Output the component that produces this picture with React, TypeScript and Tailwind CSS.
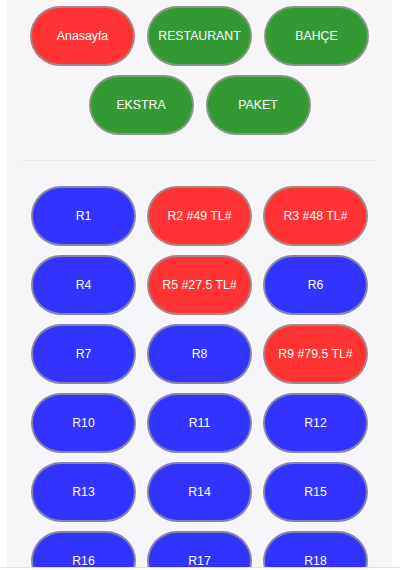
import React from 'react';

const navItems = [
  { label: 'Anasayfa', active: true },
  { label: 'RESTAURANT', active: false },
  { label: 'BAHÇE', active: false },
  { label: 'EKSTRA', active: false },
  { label: 'PAKET', active: false },
];

const busy: Record<number, string> = {
  2: '49',
  3: '48',
  5: '27.5',
  9: '79.5',
};

const tables = Array.from({ length: 21 }, (_, i) => i + 1);

const pill =
  'flex h-[60px] w-[105px] items-center justify-center rounded-full border-2 border-[#99999acc] text-[12.3px] text-white';

export default function App() {
  return (
    <div className="min-h-screen bg-white font-['Liberation_Sans',Arial,sans-serif]">
      <div className="ml-[7px] mr-[8px] bg-[#f6f6f9] pt-[6px] pb-6">
        <div className="flex flex-wrap justify-center gap-x-3 gap-y-[9px] px-4">
          {navItems.map((item) => (
            <button
              key={item.label}
              type="button"
              className={`${pill} ${item.active ? 'bg-[#ff3333]' : 'bg-[#339933]'}`}
            >
              {item.label}
            </button>
          ))}
        </div>

        <div className="mx-4 mt-[25px] mb-[25px] h-px bg-[#ebebef]" />

        <div className="grid grid-cols-[105px_105px_105px] justify-center gap-x-[11px] gap-y-[9px]">
          {tables.map((n) => {
            const price = busy[n];
            return (
              <button
                key={n}
                type="button"
                className={`${pill} ${price ? 'bg-[#ff3333]' : 'bg-[#3333ff]'}`}
              >
                {price ? `R${n} #${price} TL#` : `R${n}`}
              </button>
            );
          })}
        </div>
      </div>
      <div className="fixed inset-x-0 bottom-0 h-[3px] border-t border-[#e2e2ea] bg-white" />
    </div>
  );
}
